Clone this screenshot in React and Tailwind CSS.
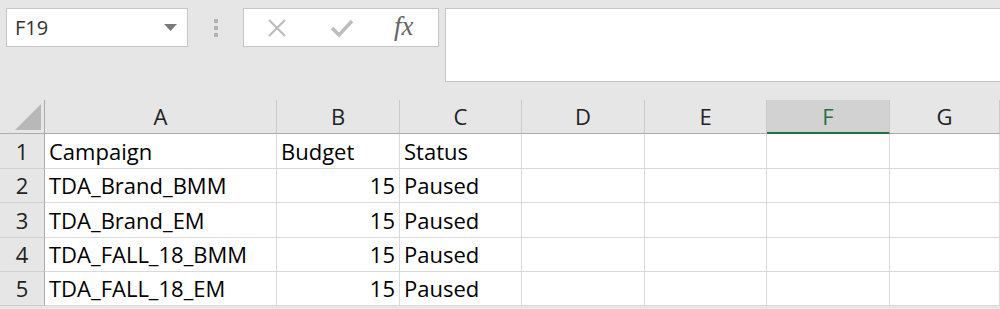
import React from 'react'

const cols = ['A', 'B', 'C', 'D', 'E', 'F', 'G']
const rows = [
  ['Campaign', 'Budget', 'Status'],
  ['TDA_Brand_BMM', '15', 'Paused'],
  ['TDA_Brand_EM', '15', 'Paused'],
  ['TDA_FALL_18_BMM', '15', 'Paused'],
  ['TDA_FALL_18_EM', '15', 'Paused'],
]
const rowH = ['h-[35px]', 'h-[34px]', 'h-[35px]', 'h-[34px]', 'h-[34px]']

function FormulaBar() {
  return (
    <div className="flex items-start h-[100px] pt-2 pl-[6px]">
      <div className="flex items-center w-[182px] h-[39px] bg-white border border-[#c6c6c6] pl-2 pr-[10px]">
        <span className="flex-1 text-[20px] text-[#333]">F19</span>
        <svg width="13" height="7" viewBox="0 0 13 7"><polygon points="0,0 13,0 6.5,7" fill="#7a7a7a" /></svg>
      </div>
      <div className="flex flex-col gap-[3px] w-[55px] h-[39px] items-center justify-center">
        <span className="w-[4px] h-[4px] bg-[#b3b3b3]" />
        <span className="w-[4px] h-[4px] bg-[#b3b3b3]" />
        <span className="w-[4px] h-[4px] bg-[#b3b3b3]" />
      </div>
      <div className="flex items-center w-[196px] h-[39px] bg-white border border-[#c6c6c6] pl-[23px]">
        <svg width="20" height="20" viewBox="0 0 20 20"><path d="M2 2 L18 18 M18 2 L2 18" stroke="#bdbdbd" strokeWidth="2.2" /></svg>
        <svg className="ml-[43px]" width="24" height="20" viewBox="0 0 24 20"><path d="M2 10 L9 17 L22 3" stroke="#bdbdbd" strokeWidth="3.4" fill="none" /></svg>
        <span className="ml-[40px] text-[27px] italic text-[#666] leading-none pb-[3px]" style={{ fontFamily: '"Liberation Serif", serif' }}>
          fx
        </span>
      </div>
      <div className="ml-[6px] flex-1 h-[74px] bg-white border border-[#c6c6c6] border-r-0" />
    </div>
  )
}

export default function App() {
  return (
    <div className="w-[1000px] h-[309px] overflow-hidden bg-[#e6e6e6]" style={{ fontFamily: '"Open Sans", "Noto Sans", sans-serif' }}>
      <FormulaBar />
      <div className="grid grid-cols-[45px_232px_123px_122px_123px_122px_123px_1fr]">
        <div className="h-[34px] border-r border-b border-[#ababab] bg-[#e6e6e6] flex items-end justify-end pr-[3px] pb-[3px]">
          <svg width="26" height="26" viewBox="0 0 26 26"><polygon points="26,0 26,26 0,26" fill="#b8b8b8" /></svg>
        </div>
        {cols.map(c => (
          <div
            key={c}
            className={c === 'F'
              ? 'h-[34px] flex items-center justify-center text-[22px] bg-[#d2d2d2] text-[#217346] border-r border-[#cacaca] border-b-2 border-b-[#217346]'
              : 'h-[34px] flex items-center justify-center text-[22px] text-[#222] bg-[#e6e6e6] border-r border-b border-r-[#cacaca] border-b-[#ababab]'}
          >
            {c}
          </div>
        ))}
        {rows.map((r, i) => (
          <React.Fragment key={i}>
            <div className={`${rowH[i]} flex items-center justify-center text-[22px] text-[#222] bg-[#e6e6e6] border-r border-b border-r-[#ababab] border-b-[#d0d0d0]`}>
              {i + 1}
            </div>
            {cols.map((c, j) => (
              <div
                key={c}
                className={`${rowH[i]} bg-white border-r border-b border-[#d9d9d9] flex items-center text-[22px] text-black px-[4px] whitespace-nowrap overflow-hidden ${j === 1 && i > 0 ? 'justify-end' : ''}`}
              >
                {r[j] || ''}
              </div>
            ))}
          </React.Fragment>
        ))}
      </div>
    </div>
  )
}
